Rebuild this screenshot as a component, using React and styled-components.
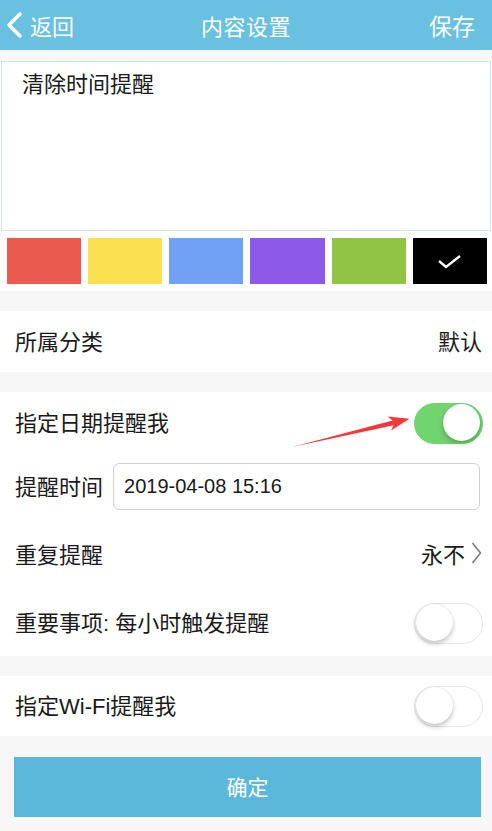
import React, { useState } from "react";
import styled, { createGlobalStyle } from "styled-components";

const GlobalStyle = createGlobalStyle`
  html, body {
    margin: 0;
    padding: 0;
    background: #f7f7f7;
  }
  body {
    font-family: "Liberation Sans", "Noto Sans CJK SC", sans-serif;
    color: #1a1a1a;
  }
  * { box-sizing: border-box; }
`;

const Page = styled.div`
  position: relative;
  width: 492px;
  min-height: 831px;
  background: #f7f7f7;
`;

const Header = styled.header`
  height: 50px;
  background: #69c0e1;
  display: grid;
  grid-template-columns: 1fr auto 1fr;
  align-items: center;
  color: #fff;
  font-size: 22px;
`;

const Back = styled.div`
  display: flex;
  align-items: center;
  gap: 7px;
  padding-left: 5px;
`;

const Title = styled.div`
  font-size: 22px;
  letter-spacing: 0.5px;
`;

const Save = styled.div`
  justify-self: end;
  padding-right: 17px;
  font-size: 23px;
`;

const Card = styled.section`
  background: #fff;
  margin-top: ${(p) => p.$gap}px;
`;

const Note = styled.div`
  height: 170px;
  margin: 0 1px;
  border: 1px solid #cbe7f1;
  padding: 10px 20px;
  font-size: 22px;
  line-height: 26px;
`;

const Swatches = styled.div`
  display: grid;
  grid-template-columns: repeat(6, 1fr);
  gap: 7px;
  padding: 7px 5px 7px 7px;
`;

const Swatch = styled.div`
  height: 46px;
  background: ${(p) => p.$color};
  display: flex;
  align-items: center;
  justify-content: center;
`;

const Row = styled.div`
  height: ${(p) => p.$h}px;
  display: flex;
  align-items: center;
  justify-content: space-between;
  padding: 0 9px 0 15px;
  font-size: 22px;
`;

const Label = styled.span`
  padding-bottom: 4px;
`;

const Value = styled.div`
  display: flex;
  align-items: center;
  gap: 6px;
  font-size: 22px;
  padding: 0 1px 4px 0;
`;

const TimeRow = styled.div`
  display: flex;
  align-items: center;
  gap: 10px;
  padding: 9px 12px 10px 15px;
  font-size: 22px;
`;

const TimeInput = styled.div`
  flex: 1;
  height: 47px;
  border: 1px solid #d2d2d2;
  border-radius: 6px;
  display: flex;
  align-items: center;
  padding-left: 10px;
  font-size: 20px;
`;

const Track = styled.button`
  position: relative;
  width: 69px;
  height: 41px;
  border-radius: 21px;
  border: 1.5px solid ${(p) => (p.$on ? "#70d46f" : "#e6e6e6")};
  background: ${(p) => (p.$on ? "#70d46f" : "#fff")};
  padding: 0;
  cursor: pointer;
`;

const Knob = styled.span`
  position: absolute;
  top: 0.5px;
  left: ${(p) => (p.$on ? "28px" : "0.5px")};
  width: 37px;
  height: 37px;
  border-radius: 50%;
  background: #fff;
  box-shadow: 0 3px 5px rgba(0, 0, 0, 0.22), 0 0 1px rgba(0, 0, 0, 0.15);
`;

const Footer = styled.div`
  padding: 21px 11px 14px 14px;
`;

const Confirm = styled.button`
  width: 100%;
  height: 60px;
  border: none;
  background: #5bb8db;
  color: #fff;
  font-family: inherit;
  font-size: 21px;
  padding-bottom: 3px;
`;

const Annotation = styled.svg`
  position: absolute;
  left: 0;
  top: 0;
  pointer-events: none;
`;

const Toggle = ({ on, onClick }) => (
  <Track $on={on} onClick={onClick}>
    <Knob $on={on} />
  </Track>
);

const colors = ["#ea5a4f", "#fbe14f", "#70a1f4", "#8c59e8", "#91c344", "#000000"];

const App = () => {
  const [dateOn, setDateOn] = useState(true);
  const [hourly, setHourly] = useState(false);
  const [wifi, setWifi] = useState(false);

  return (
    <Page>
      <GlobalStyle />
      <Header>
        <Back>
          <svg width="18" height="28" viewBox="0 0 18 28">
            <path d="M15 3 L4 14 L15 25" fill="none" stroke="#fff" strokeWidth="3.6" strokeLinecap="round" strokeLinejoin="round" />
          </svg>
          <span>返回</span>
        </Back>
        <Title>内容设置</Title>
        <Save>保存</Save>
      </Header>

      <Card $gap={11}>
        <Note>清除时间提醒</Note>
        <Swatches>
          {colors.map((c, i) => (
            <Swatch key={c} $color={c}>
              {i === colors.length - 1 && (
                <svg width="26" height="18" viewBox="0 0 26 18">
                  <path d="M2 9 L9 15 L23 4" fill="none" stroke="#fff" strokeWidth="2.4" />
                </svg>
              )}
            </Swatch>
          ))}
        </Swatches>
      </Card>

      <Card $gap={20}>
        <Row $h={61}>
          <Label>所属分类</Label>
          <Value>默认</Value>
        </Row>
      </Card>

      <Card $gap={20}>
        <Row $h={62}>
          <Label>指定日期提醒我</Label>
          <Toggle on={dateOn} onClick={() => setDateOn(!dateOn)} />
        </Row>
        <TimeRow>
          <Label>提醒时间</Label>
          <TimeInput>2019-04-08 15:16</TimeInput>
        </TimeRow>
        <Row $h={70}>
          <Label>重复提醒</Label>
          <Value>
            永不
            <svg width="11" height="24" viewBox="0 0 11 24">
              <path d="M1.5 2 L9.5 12 L1.5 22" fill="none" stroke="#777" strokeWidth="1.5" />
            </svg>
          </Value>
        </Row>
        <Row $h={66}>
          <Label>重要事项: 每小时触发提醒</Label>
          <Toggle on={hourly} onClick={() => setHourly(!hourly)} />
        </Row>
      </Card>

      <Card $gap={20}>
        <Row $h={60}>
          <Label>指定Wi-Fi提醒我</Label>
          <Toggle on={wifi} onClick={() => setWifi(!wifi)} />
        </Row>
      </Card>

      <Footer>
        <Confirm>确定</Confirm>
      </Footer>

      <Annotation width="492" height="831" viewBox="0 0 492 831">
        <polygon
          points="292,447 393.6,425.2 391,430.5 409.5,418.8 387.6,416.6 392.6,420.6"
          fill="#f4383a"
        />
      </Annotation>
    </Page>
  );
};

export default App;
